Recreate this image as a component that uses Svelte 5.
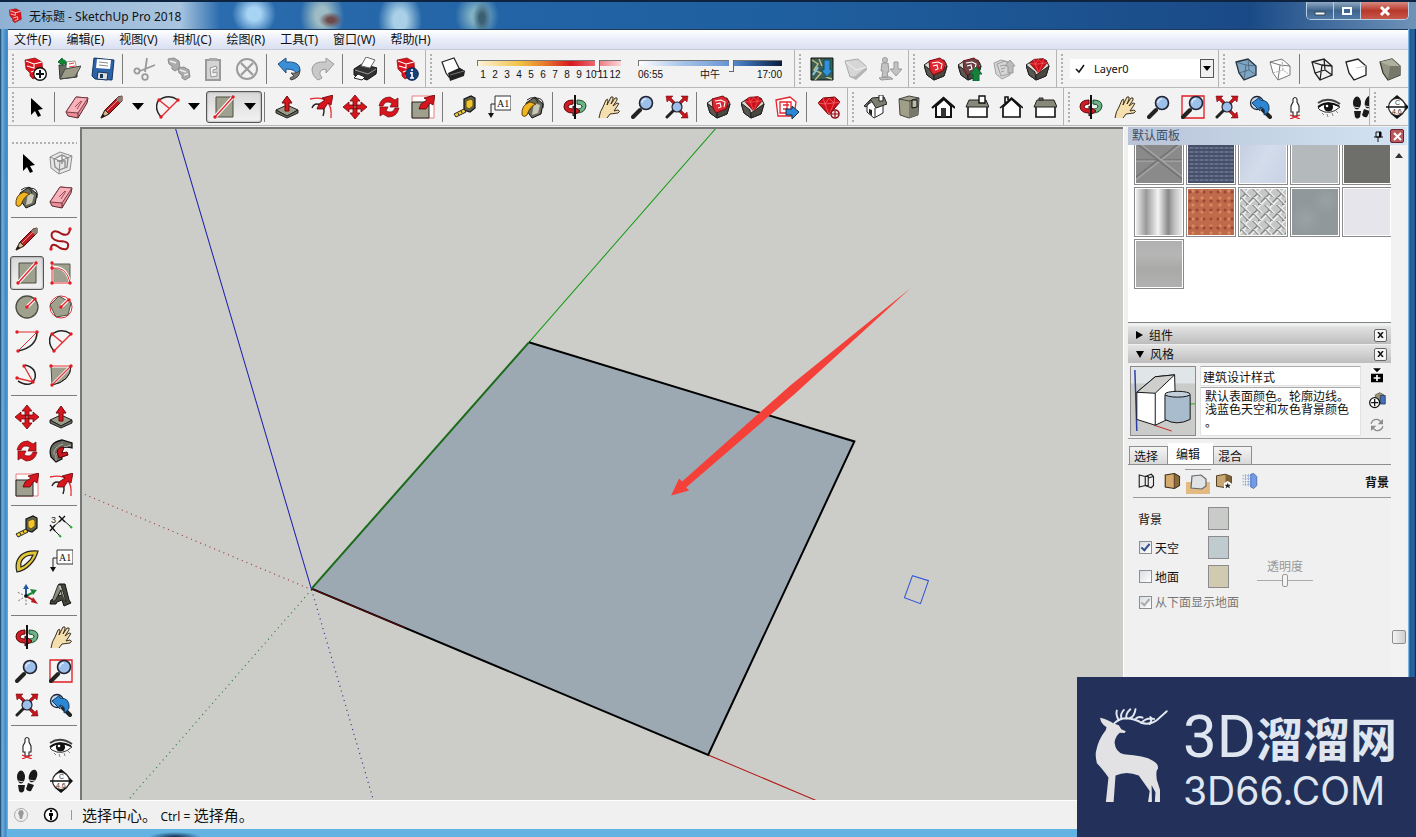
<script lang="ts">
    // Shared icon fragments, all drawn on a 24 x 24 grid
    const cube = 'M2 5 L14 2 L22 9 L22 18 L10 23 L5 16 Z';
    const handle = '<path d="M9 15 L2 22" stroke="#222" stroke-width="4" stroke-linecap="round"/>';
    const lens = '<circle cx="15" cy="8" r="6.5" fill="#9cc0ea" stroke="#223" stroke-width="1.6"/><path d="M11 8a4 4 0 0 1 4-4" stroke="#dcebfa" stroke-width="1.5" fill="none"/>';
    const logo = '<path d="M2 3 L12 1 L19 5 L20 17 L10 22 L7 19 L7 16 L3 12 Z" fill="#d8141c" stroke="#8e0c12" stroke-width=".7"/><path d="M3 4 L11 7 L19 5 M11 7 L11 11 L4 9 M8 15 L14 13 L15 17 L10 19" stroke="#fff" stroke-width="1.1" fill="none"/>';
    const greyLogo = 'M1 2 L7 1 L12 4 L13 11 L8 14 L5 12 L5 9 L2 7 Z';
    const arrowUpRight = '<path d="M24 0 L22 10 L19 8 L15 14 L8 14 L10 9 L16 5 L13 3 Z" fill="#d8141c" stroke="#5e0508" stroke-width=".8"/>';
    const redArrows = '<path d="M1 1h7l-2 2 4 4-2 2-4-4-2 2z M23 1h-7l2 2-4 4 2 2 4-4 2 2z M23 23h-7l2-2-4-4 2-2 4 4 2-2z" fill="#c4151c" stroke="#6a0a0e" stroke-width=".5"/>';
    // opened carton with something lying in it
    const carton = (inside: string) =>
        `<path d="M0 8 L6 4 L20 3 L23 9 L20 19 L10 23 L3 18 Z" fill="#ded9d0" stroke="#222"/><path d="M0 8 L3 18 L10 23 L9 15Z" fill="#5a5650" stroke="#222"/><path d="M23 9 L20 19 L10 23 L10 18Z" fill="#4a4640" stroke="#222"/>${inside}`;
    const carton3 = (fill: string) =>
        carton(`<path d="M5 4 L16 1 L22 6 L19 14 L9 18 L6 13 Z" fill="${fill}" stroke="#7a0a10"/><path d="M8 6l6-1 4 2-1 5M9 9l4-1 1 4-3 1" stroke="#fff" stroke-width="1.1"/>`);
    const gem = '<path d="M1 8 L6 3 L18 2 L23 7 L12 20 Z" fill="#cf1018" stroke="#6c060a"/><path d="M1 8 L8 9 L17 8 L23 7 M6 3 L8 9 L12 20 L17 8 L18 2 M8 9 L12 3 L17 8" stroke="#ff8086" stroke-width=".6" fill="none"/>';
    const dot = (x: number, y: number) => `<circle cx="${x}" cy="${y}" r="1.7" fill="#e01b22"/>`;

    const icons: Record<string, string> = {
        newFile: logo + '<circle cx="17" cy="17" r="6.3" fill="#fff" stroke="#111" stroke-width="1.4"/><path d="M17 13v8M13 17h8" stroke="#111" stroke-width="2"/>',
        open: '<path d="M2 8 L9 8 L11 10 L20 10 L20 20 L3 22 Z" fill="#6c6c5c" stroke="#333"/><path d="M9 5 L18 4 L20 13 L10 14 Z" fill="#fff" stroke="#999"/><path d="M12 7l5-1M12 10l6-1" stroke="#e33"/><path d="M3 22 L8 12 L24 9 L18 20 Z" fill="#9c9b88" stroke="#444"/><path d="M1 5 L5 1 L6 3 Q10 3 9 8 Q8 6 6 6 L6 8Z" fill="#148a2c" stroke="#063"/>',
        save: '<path d="M3 1 L23 3 L21 23 L4 22 L1 19 Z" fill="#2b63a8" stroke="#16355e"/><path d="M6 2 L20 3 L19 12 L5 11 Z" fill="#fff"/><path d="M8 5l9 1M8 8l9 1" stroke="#888"/><path d="M7 15 L17 16 L16 23 L6 22 Z" fill="#ddd" stroke="#16355e"/><path d="M9 17h3v4H9z" fill="#16355e"/>',
        cut: '<g fill="none" stroke="#999" stroke-width="1.8"><path d="M14 1 L12 15 M22 8 L7 14"/><circle cx="4" cy="14" r="2.6"/><circle cx="12" cy="20" r="2.8"/></g>',
        copy: `<g fill="#ababab" stroke="#8d8d8d"><path d="${greyLogo}"/><path d="${greyLogo}" transform="translate(10 9)"/></g><path d="M3 4l6 2M13 13l6 2M17 18l4-1" stroke="#eee" stroke-width="1.4"/>`,
        paste: '<path d="M5 3h14v20H5z" fill="#d4d4d4" stroke="#9a9a9a" stroke-width="2"/><path d="M8 1h8v3H8z" fill="#aaa"/><path d="M9 11l6-2 1 3-4 1v3l4-1v4l-6 1z" fill="#f2f2f2" stroke="#999"/>',
        erase: '<circle cx="12" cy="12" r="10" fill="none" stroke="#9c9c9c" stroke-width="2"/><path d="M6 6l12 12M18 6L6 18" stroke="#9c9c9c" stroke-width="2.2"/>',
        undo: '<path d="M1 7 L9 1 L9 5 Q22 4 23 12 Q23 17 19 18 Q20 12 9 12 L9 16 Z" fill="#3b8fd6" stroke="#1d4f85"/><path d="M14 16q6 1 9-3 0 8-9 10l-1-2 4-2z" fill="#777a72" stroke="#444"/>',
        redo: '<path d="M23 7 L15 1 L15 5 Q2 4 1 12 Q1 19 7 23 L11 21 Q5 13 15 12 L15 16 Z" fill="#c9c9c9" stroke="#9b9b9b"/>',
        print: '<path d="M1 12 L9 7 L24 11 L23 17 L14 23 L1 18Z" fill="#333" stroke="#111"/><path d="M8 9 L13 0 L22 3 L17 11Z" fill="#fff" stroke="#666"/><path d="M2 13 L15 17 L23 12" stroke="#999" fill="none"/><path d="M1 21 L5 17 L12 20 L9 23Z" fill="#fff" stroke="#222"/>',
        info: logo + '<circle cx="17" cy="17" r="6.3" fill="#173f7a" stroke="#0c254b"/><path d="M17 15v6M17 12v2M15 16h2M15 21h4" stroke="#fff" stroke-width="1.6"/>',
        shadow: '<path d="M1 5 L13 1 L18 11 L23 14 L8 20 L5 16Z" fill="#fff" stroke="#222" stroke-width="1.2"/><path d="M7 16 L18 11 L24 14 L23 19 L9 24Z" fill="#222"/><path d="M9 18l14-4" stroke="#777"/>',
        map: '<path d="M1 1h22v22H1z" fill="#3d5d52" stroke="#111"/><path d="M2 3l6 4-4 6 7 3-6 7M9 2l3 7M16 20l6 2" stroke="#b9bd8a" stroke-width="1.5" fill="none"/><path d="M3 18l5-8" stroke="#8ac2e0" stroke-width="2"/><path d="M14 3h6v10h3l-6 7-6-7h3z" fill="#3190dd" stroke="#155"/>',
        terrain: '<path d="M1 4 L14 2 L23 10 L11 20 L6 20Z" fill="#d6d6d6" stroke="#aaa"/><path d="M11 20 L23 10 L23 13 L12 23 L6 20Z" fill="#b5b5b5"/><path d="M2 5l10 8 11-3" stroke="#f2f2f2" fill="none"/>',
        photo: '<g fill="#c3c3c3" stroke="#989898"><circle cx="7" cy="3" r="2.5"/><path d="M4 6h6l1 9H9l1 5H4l1-6H3zM1 21l11-1 3 2-12 1z"/><path d="M16 5h4v7h4l-6 7-6-7h4z"/></g>',
        warehouse: carton3('#dd2830'),
        share: carton3('#6a4246') + '<path d="M15 24v-7h-3l6-7 6 7h-3v7z" fill="#17813b" stroke="#063"/>',
        shareOff: '<path d="M2 6 L9 3 L20 6 L18 18 L10 22 L4 17Z M5 7l8-3 5 4-1 9-8 2z M8 9l5-1M9 12l4-1M9 15l3-1" fill="#d6d6d6" stroke="#9e9e9e"/><path d="M16 16V9h-3l5-6 5 6h-2v7z" fill="#bbb" stroke="#999"/>',
        extension: carton(`<g transform="translate(3 0) scale(.8)">${gem}</g>`),
        xray: `<path d="${cube}" fill="#7ea6c4" stroke="#25323d" stroke-width="1.3"/><path d="M2 5 L12 8 L22 9 M12 8 L10 23 M5 16 L15 13 L22 18 M14 2 L15 13" stroke="#40566a" stroke-width=".7" fill="none"/>`,
        backEdges: `<path d="${cube}" fill="#fff" stroke="#777"/><path d="M2 5 L12 8 L22 9 M12 8 L10 23" stroke="#777" fill="none"/><path d="M5 16 L15 13 L22 18 M14 2 L15 13" stroke="#aaa" stroke-dasharray="2 1" fill="none"/>`,
        wireframe: `<path d="${cube}M2 5 L12 8 L22 9 M12 8 L10 23 M5 16 L15 13 L22 18 M14 2 L15 13" fill="none" stroke="#222" stroke-width="1.3"/>`,
        hidden: `<path d="${cube}" fill="#fff" stroke="#222" stroke-width="1.3"/><path d="M22 9 L12 11" stroke="#ccc"/>`,
        shaded: `<path d="${cube}" fill="#949583" stroke="#34352c" stroke-width="1.2"/><path d="M2 5 L12 9 L22 9 L14 2Z" fill="#b0b09e"/><path d="M12 9 L10 23 L22 18 V9Z" fill="#77786a"/>`,
        select: '<path d="M8 3 L8 20 L12 16 L15 22 L18 20.500 L15 15 L20 14Z" fill="#000"/>',
        eraser: '<path d="M1 17 L11 2 L23 3 L22 8 L13 23 L3 21Z" fill="#ec8f9a" stroke="#592b31"/><path d="M1 17 L13 18 L23 3 L11 2Z" fill="#f7b3bb" stroke="#7c3a42"/><path d="M13 18v5" stroke="#592b31"/><path d="M10 12l6-6M12 14l5-8" stroke="#a34650"/>',
        pencil: '<path d="M1 23 L5 15 L18 2 L22 1 L22 6 L9 19Z" fill="#bd1c24" stroke="#4d080b"/><path d="M1 23 L5 15 L9 19Z" fill="#d6b892" stroke="#332"/><path d="M1 23l2-4 2 2z" fill="#111"/><path d="M18 2l4-1v5l-2 2-4-4z" fill="#8c8075"/><path d="M7 16L18 5" stroke="#f08a8f"/>',
        pieArc: '<path d="M2 6 Q12 -2 22 5 M2 6 Q-2 14 5 22" stroke="#222" stroke-width="1.5" fill="none"/><path d="M3 5 L14 14 M22 5 L5 22" stroke="#e32b31" stroke-width="1.4"/>' + dot(3, 5) + dot(22, 5) + dot(5, 22),
        rect: '<path d="M4 2h17v20H4z" fill="#a0a08e" stroke="#4e4e43"/><path d="M3 22L21 2" stroke="#fff" stroke-width="3.5"/><path d="M3 22L21 2" stroke="#e32b31" stroke-width="1.5"/>' + dot(3, 22) + dot(21, 2),
        pushPull: '<path d="M1 15 L12 10 L23 15 L12 21Z" fill="#9a9b88" stroke="#222"/><path d="M1 15v3l11 5 11-5v-3l-11 6z" fill="#6b6c5e" stroke="#222"/><path d="M10 16V8H7l5-7 5 7h-3v8z" fill="#d8141c" stroke="#6e080c"/>',
        offset: '<path d="M1 4 Q24 -1 22 23" stroke="#e32b31" stroke-width="1.3" fill="none"/><path d="M3 13 Q5 7 12 10 Q17 13 14 21" stroke="#222" stroke-width="1.4" fill="none"/>' + arrowUpRight,
        move: '<path d="M12 0l5 6h-3v5h-4V6H7z M12 24l5-6h-3v-5h-4v5H7z M0 12l6-5v3h5v4H6v3z M24 12l-6-5v3h-5v4h5v3z" fill="#d8141c" stroke="#6e080c" stroke-width=".8"/>',
        rotate: '<path d="M2 11 Q4 2 13 2 L18 5 L21 3 V12 H13 L15 8 Q8 5 6 11Z" fill="#d8141c" stroke="#6e080c" stroke-width=".7"/><path d="M22 13 Q20 22 11 22 L6 19 L3 21 V12 H11 L9 16 Q16 19 18 13Z" fill="#d8141c" stroke="#6e080c" stroke-width=".7"/>',
        scale: '<path d="M1 1h22v22H1z" fill="#fff" stroke="#f07a7e"/><path d="M1 7h17v16H1z" fill="#a0a08e" stroke="#222"/>' + arrowUpRight,
        tape: '<path d="M11 4 L18 1 L22 3 L22 13 L17 17 L11 15Z" fill="#5e5f53" stroke="#111" stroke-width="1.2"/><path d="M13 6 L18 4 L20 6 V11 L16 14 L13 12Z" fill="#eec52e" stroke="#665311"/><path d="M11 14 L1 19 L3 22 L13 17Z" fill="#f4cf2e" stroke="#222"/><path d="M5 18l1 2M8 16l1 2" stroke="#222"/>',
        label: '<path d="M8 1h16v14H8z" fill="#fff" stroke="#333"/><text x="10" y="12" font-family="Liberation Serif, serif" font-size="10" fill="#111">A1</text><path d="M8 9H4v10" stroke="#222" fill="none"/><path d="M1 18h6l-3 5z" fill="#111"/>',
        paint: '<path d="M5 8 L14 2 L22 9 L20 19 L11 23 L6 16Z" fill="#6a6b5e" stroke="#111"/><path d="M6 5 Q14 -1 17 8 M15 3 Q24 3 22 13" stroke="#222" fill="none"/><path d="M13 8l6 2-2 8-6 2z" fill="#c7c8b6"/><path d="M1 20 Q0 10 9 7 L15 9 Q9 11 6 20 Q3 23 1 20Z" fill="#f1b521" stroke="#5c4208"/>',
        orbit: '<path d="M14 5 Q23 5 23 11 Q22 18 14 18 L14 14 Q19 14 19 11 Q18 9 14 9Z" fill="#6fb186" stroke="#134c29"/><path d="M10 5 Q1 5 1 12 Q2 18 10 18 L10 21 L17 16 L10 11 L10 14 Q5 14 5 11 Q7 9 10 9Z" fill="#cf1c25" stroke="#570609"/><path d="M12 0v24" stroke="#111" stroke-width="2"/>',
        pan: '<path d="M2 23 Q3 16 6 12 L9 5 Q11 3 11 6 L10 10 L14 2 Q17 1 16 4 L14 9 L18 3 Q21 2 20 5 L16 11 L20 8 Q23 8 21 10 L17 16 L21 15 Q24 16 21 18 L13 19 L10 23" fill="#f6dfae" stroke="#3a3020"/>',
        zoom: handle + lens,
        zoomWindow: '<path d="M1 1h22v22H1z" fill="none" stroke="#e01b22" stroke-width="1.3"/>' + handle + lens,
        zoomExtents: redArrows + '<path d="M9 15L2 22" stroke="#222" stroke-width="3" stroke-linecap="round"/><circle cx="12" cy="12" r="5" fill="#9cc0ea" stroke="#223" stroke-width="1.2"/>',
        previous: '<circle cx="8" cy="8" r="6.500" fill="#c5d9ed" stroke="#223" stroke-width="1.3"/><path d="M14 15l7 7" stroke="#222" stroke-width="4" stroke-linecap="round"/><path d="M3 8 L11 2 L11 5 Q21 5 20 15 Q18 19 15 20 Q17 13 11 12 L11 16Z" fill="#2e87d2" stroke="#123d68"/>',
        iso: '<path d="M4 10v7l7 6 9-5V9L10 6z" fill="#fff" stroke="#222"/><path d="M1 11 L9 3 L21 2 L24 9 L13 13 L8 5 L3 12Z" fill="#7d7e70" stroke="#222"/><path d="M16 0h4v6h-4z" fill="#fff" stroke="#222"/><path d="M6 14l3 1v6l-3-3z" fill="#222"/><path d="M12 13v9" stroke="#222"/>',
        top: '<path d="M2 4 L12 1 L22 3 L21 20 L12 23 L3 20Z" fill="#a09f88" stroke="#444"/><path d="M12 6v17l9-3V3z" fill="#77786a"/><path d="M2 4l10 2 10-3" stroke="#444" fill="none"/><path d="M15 5h5v7l-5 1z" fill="#bcbba8" stroke="#111"/>',
        front: '<path d="M5 11v11h15V11l-7-7z" fill="#fff" stroke="#111" stroke-width="2"/><path d="M1 13L12.500 3 24 13" stroke="#111" stroke-width="2.200" fill="none"/><path d="M10 13h5v9h-5z" fill="#333"/>',
        right: '<path d="M3 11h19v11H3z" fill="#fff" stroke="#111" stroke-width="1.600"/><path d="M4 5h17l3 7H1z" fill="#88897a" stroke="#222"/><path d="M14 1h6v7h-6z" fill="#fff" stroke="#111" stroke-width="1.400"/>',
        back: '<path d="M4 12v10h17V12l-8.500-8z" fill="#fff" stroke="#111" stroke-width="1.700"/><path d="M1 13L12.500 3 24 13M6 8V2h3v3" stroke="#111" stroke-width="1.600" fill="none"/>',
        left: '<path d="M3 11h19v11H3z" fill="#fff" stroke="#111" stroke-width="1.600"/><path d="M4 5h17l3 7H1z" fill="#88897a" stroke="#222"/><path d="M6 3h4v2H6z" fill="#88897a" stroke="#222"/>',
        send: '<g stroke="#e4252d" fill="#fff" stroke-width="1.300"><path d="M1 5l14-3 6 5-2 14H3z"/><path d="M5 7h11v11H5zM8 10h6M8 14h5M12 7v8" fill="none"/></g><path d="M11 14h6v-3l7 6-7 7v-4h-6z" fill="#2e87d2" stroke="#134"/>',
        gem: gem + '<circle cx="18" cy="19" r="4" fill="#f5e4e4" stroke="#8e1016" stroke-width="1.600"/><path d="M18 16v6M15 19h6" stroke="#8e1016" stroke-width="1.200"/>',
        position: '<path d="M10 4q2-3 4 0v3l2 4v6h-2v4h-4v-4H8v-6l2-4z" fill="#fff" stroke="#222" stroke-width="1.100"/><path d="M7 20l10 4M17 20L7 24" stroke="#e01b22" stroke-width="1.300"/>',
        look: '<path d="M1 13Q10 4 23 12Q13 21 3 15Z" fill="#fff" stroke="#333"/><path d="M1 8Q11 1 23 9" stroke="#444" stroke-width="2" fill="none"/><path d="M1 12Q10 5 22 11" stroke="#111" stroke-width="1.800" fill="none"/><circle cx="11.500" cy="12" r="4.600" fill="#111"/><circle cx="10" cy="11" r="1.300" fill="#fff"/><path d="M5 18l2 2M10 19l1 3M15 18l1 3M19 16l2 2" stroke="#888"/>',
        walk: '<g fill="#1a1a1a"><ellipse cx="6" cy="8" rx="4" ry="6.500"/><path d="M3 16h7l-1 6q-3 3-5 0z"/><ellipse cx="18" cy="7" rx="4" ry="6.500" transform="rotate(18 18 7)"/><path d="M13 14l6 2-3 6q-3 1-5-2z"/></g><path d="M3 12l6 1M14 11l6 1" stroke="#ddd"/>',
        section: '<path d="M18 6l6 6-6 6zM12 0l6 5H6zM12 24l6-5H6z" fill="#111"/><circle cx="12" cy="12" r="8.500" fill="#fff" stroke="#222" stroke-width="1.200"/><path d="M1 12h22" stroke="#111" stroke-width="1.500"/><g font-family="Liberation Sans, sans-serif" font-size="7" fill="#333"><text x="10" y="10">C</text><text x="7" y="19">4.6</text></g>',
        component: '<path d="M1 6L11 1l12 4-2 14-11 4-8-6zM1 6l10 4 12-5M11 10l-1 13" fill="#e6e6e6" stroke="#8c8c8c"/><path d="M5 8l8-4 6 3-1 9-8 3-4-3zM8 10h8v6M13 5v8" fill="none" stroke="#8c8c8c" stroke-width="1.300"/>',
        freehand: '<path d="M2 22 Q2 14 11 21 Q20 25 19 17 Q18 14 9 14 Q1 12 3 6 Q6 2 13 7 Q20 10 21 2" stroke="#a0161c" stroke-width="2" fill="none"/>' + dot(2, 22) + dot(21, 2),
        rotRect: '<path d="M3 3h18v18H3z" fill="#a0a08e" stroke="#5c5c50"/><path d="M3 2v20h18M3 6Q17 5 21 21" stroke="#fff" stroke-width="2.500" fill="none"/><path d="M3 2v20h18M3 7Q17 5 21 21" stroke="#e32b31" fill="none"/>' + dot(3, 2) + dot(3, 7) + dot(3, 22) + dot(21, 22),
        circle: '<circle cx="12" cy="12" r="11" fill="#a0a08e" stroke="#4c4c41" stroke-width="1.300"/><path d="M12 12l7-7" stroke="#fff" stroke-width="3.500"/><path d="M12 12l7-7" stroke="#e32b31" stroke-width="1.400"/>' + dot(12, 12) + dot(20, 4),
        polygon: '<circle cx="12" cy="12" r="11" fill="#fff" stroke="#e32b31"/><path d="M10 1L22 8l-3 12-12 2L1 10z" fill="#a0a08e" stroke="#4c4c41"/><path d="M12 12l7-7" stroke="#fff" stroke-width="3.500"/><path d="M12 12l7-7" stroke="#e32b31" stroke-width="1.400"/>' + dot(12, 12) + dot(20, 5),
        arc: '<path d="M22 3Q22 18 3 22" stroke="#222" stroke-width="1.500" fill="none"/><path d="M2 3h20L3 22" stroke="#e32b31" fill="none"/>' + dot(2, 3) + dot(22, 3) + dot(3, 22),
        arc3: '<path d="M10 2Q22 5 20 15Q16 26 3 18" stroke="#222" stroke-width="1.500" fill="none"/><path d="M9 3L18 19 2 15" stroke="#e32b31" stroke-width="1.300" fill="none"/>' + dot(9, 3) + dot(18, 19) + dot(2, 15),
        pie: '<path d="M2 3H22Q21 19 3 22Z" fill="#a0a08e" stroke="#4c4c41"/><path d="M3 22L22 3H2" stroke="#fff" stroke-width="3" fill="none"/><path d="M3 22L22 3H2" stroke="#e32b31" stroke-width="1.200" fill="none"/><path d="M22 3Q22 18 3 22" stroke="#222" fill="none"/>' + dot(2, 3) + dot(22, 3) + dot(3, 22),
        follow: '<path d="M2 18Q-2 4 13 1L23 4V9Q13 6 12 13L13 20 7 23Z" fill="#6b6c60" stroke="#111" stroke-width="1.300"/><path d="M5 16Q4 8 14 5M7 22Q4 9 22 6" stroke="#aaa" fill="none"/><path d="M8 13Q9 8 15 8L13 14l5-1 1 3-9 3z" fill="#c8161d" stroke="#500"/>',
        dimension: '<path d="M3 13L13 4M3 13l7 7M13 4l8 7" stroke="#222"/><path d="M1 10l5 6M6 10l-5 6M10 1l6 6M16 1l-6 6" stroke="#111" stroke-width="1.400"/><path d="M10 20l2 2M21 11l2 2" stroke="#2a2" stroke-width="2"/><text x="2" y="8" font-family="Liberation Sans, sans-serif" font-size="9" fill="#222">3</text>',
        protractor: '<path d="M2 23 Q-1 13 6 6 Q12 1 23 2 Q21 10 15 16 Q9 22 2 23Z M6 18Q5 12 9 9Q12 6 18 6Q16 11 12 14Q9 17 6 18Z" fill="#e2c735" fill-rule="evenodd" stroke="#222" stroke-width="1.200"/>',
        axes: '<path d="M11 13V5" stroke="#2257a2" stroke-width="2"/><path d="M8 6l3-5 3 5z" fill="#2257a2"/><path d="M11 13l6-3" stroke="#1e8238" stroke-width="2"/><path d="M15 6l7 1-4 5z" fill="#1e8238"/><path d="M11 13l7 4" stroke="#b91a22" stroke-width="2"/><path d="M18 14l5 7-7-2z" fill="#b91a22"/><path d="M11 13v9M11 13L2 9M11 13l-8 5" stroke="#777" stroke-dasharray="2 1.500"/><circle cx="11" cy="13" r="1.800" fill="#111"/>',
        text3d: '<path d="M10 1h6l4 16 2 3-7 3-2-6-5 2-1 2H1l1-4 3-1z" fill="#44453c" stroke="#111"/><path d="M9 2h3l5 17M9 13l4-1-1-5z" fill="#c9cabc" stroke="#111" stroke-width=".8"/><path d="M9 2L3 18h3l6-11" fill="#8b8c7c" stroke="#111" stroke-width=".8"/>',
        addDetail: '<path d="M4 1h16v7H4z" fill="#fff"/><path d="M6 2h12l-6 6zM3 10h18v13H3z" fill="#000"/><path d="M12 12v9M7 16.500h10" stroke="#fff" stroke-width="2.500"/>',
        newStyle: '<path d="M9 4l6-3 6 3v10l-6 2-6-3z" fill="#9b9373" stroke="#554"/><path d="M16 5h7v12h-7z" fill="#416fbd" stroke="#234"/><circle cx="8" cy="15" r="7" fill="#fff" stroke="#111" stroke-width="1.800"/><path d="M8 10v10M3 15h10" stroke="#111" stroke-width="1.800"/>',
        refresh: '<path d="M3 10Q6 2 14 4l4 3M21 14Q18 22 10 20l-4-3" stroke="#8c8c8c" stroke-width="2" fill="none"/><path d="M21 3v8h-8zM3 21v-8h8z" fill="#8c8c8c"/>',
        edgeTab: '<path d="M3 4l8 2 8-3 3 3v12l-3 3-8-3-8 2zM11 6v12M11 6h4v12h-4M22 6l-7 2" fill="#eee" stroke="#222" stroke-width="1.500"/>',
        faceTab: '<path d="M3 4l12-2 7 4v12l-7 4-12-2z" fill="#d6aa6c" stroke="#3b2e1c" stroke-width="1.500"/><path d="M15 2v20l7-4V6z" fill="#8a6a3c" stroke="#3b2e1c"/>',
        skyTab: '<path d="M0 12h24v12H0z" fill="#e3bb82"/><path d="M6 6l9-1 5 4v7l-4 3-11-1z" fill="#dfe3e5" stroke="#666" stroke-width="1.200"/>',
        markTab: '<path d="M2 5l12-2 8 3v11l-7 4-13-2z" fill="#c9a671" stroke="#4e3c22" stroke-width="1.300"/><path d="M14 3v17l8-3V6z" fill="#7a6138"/><path d="M12 15l5-3 6 4-4 7-7-1z" fill="#fff"/><path d="M17 14l1 3h3l-2 2 1 3-3-2-3 2 1-3-2-2h3z" fill="#222"/>',
        modelTab: '<path d="M2 5h11M2 9h11M2 13h11M2 17h11M6 3v16M10 3v16" stroke="#6d94dc" stroke-dasharray="2 1"/><path d="M13 3l4-1 4 4v12l-4 4-4-2z" fill="#739ae4" stroke="#3a5da6"/>'
    };

    type Item = { icon?: string; label?: string; drop?: boolean; on?: boolean; sep?: boolean };
    const sep: Item = { sep: true };
    const list = (names: string): Item[] => names.split(' ').map((n) => (n === '|' ? sep : { icon: n, label: n }));

    const standard = list('newFile open save | cut copy paste erase | undo redo | print | info');
    const location = list('map terrain photo');
    const storeTools = list('warehouse share shareOff extension');
    const faceStyles = list('xray backEdges | wireframe hidden shaded');
    const started: Item[] = [
        ...list('select | eraser'),
        { icon: 'pencil', label: 'Line', drop: true },
        { icon: 'pieArc', label: 'Arc', drop: true },
        { icon: 'rect', label: 'Rectangle', drop: true, on: true },
        ...list('| pushPull offset move rotate scale | tape label paint | orbit pan zoom zoomExtents | warehouse extension send | gem')
    ];
    const views = list('iso top front right back left');
    const camera = list('orbit pan zoom zoomWindow zoomExtents previous position look walk');
    const sideTools = list(
        'select component paint eraser | pencil freehand rect rotRect circle polygon arc pieArc arc3 pie | move pushPull rotate follow scale offset | tape dimension protractor label axes text3d | orbit pan zoom zoomWindow zoomExtents previous | position look walk section'
    ).map((item) => ({ ...item, on: item.icon === 'rect' }));

    const menus = ['文件(F)', '编辑(E)', '视图(V)', '相机(C)', '绘图(R)', '工具(T)', '窗口(W)', '帮助(H)'];
    const months = [1, 2, 3, 4, 5, 6, 7, 8, 9, 10, 11, 12];
    const materials = ['star', 'weave', 'frost', 'plain', 'dark', 'chrome', 'rust', 'tread', 'blotch', 'pale', 'brushed'];
    const styleTabs = ['edgeTab', 'faceTab', 'skyTab', 'markTab', 'modelTab'];

    let month = $state(10.3);
    let time = $state(65);
    let opacity = $state(50);
    let sky = $state(true);
    let ground = $state(false);
    let styleName = $state('建筑设计样式');
    let styleText = $state('默认表面颜色。轮廓边线。浅蓝色天空和灰色背景颜色。');
</script>

{#snippet glyph(name: string, size: number)}
    <svg width={size} height={size} viewBox="0 0 24 24" fill="none" aria-hidden="true">{@html icons[name]}</svg>
{/snippet}

{#snippet tools(items: Item[])}
    {#each items as item}
        {#if item.sep}
            <span class="sep"></span>
        {:else}
            <button class="tool" class:drop={item.drop} class:on={item.on} aria-label={item.label}>
                {@render glyph(item.icon ?? '', 24)}
                {#if item.drop}
                    <svg width="12" height="7" viewBox="0 0 12 7"><path d="M0 0h12L6 7z" /></svg>
                {/if}
            </button>
        {/if}
    {/each}
{/snippet}

<div class="window">
    <header class="titlebar">
        <svg width="16" height="16" viewBox="0 0 24 24" fill="none">{@html logo}</svg>
        <h1>无标题 - SketchUp Pro 2018</h1>
        <div class="controls">
            <button aria-label="Minimize"><svg width="14" height="12"><path d="M2 7h10v3H2z" fill="#fff" stroke="#345" stroke-width="1" /></svg></button>
            <button aria-label="Maximize"><svg width="14" height="12"><path d="M3 3h8v6H3z" fill="none" stroke="#fff" stroke-width="2" /></svg></button>
            <button class="quit" aria-label="Close"><svg width="14" height="12"><path d="M3 2l8 8M11 2l-8 8" stroke="#fff" stroke-width="3" /></svg></button>
        </div>
    </header>

    <div class="client">
        <nav class="menubar">
            {#each menus as menu}
                <button>{menu}</button>
            {/each}
        </nav>

        <div class="toolrow">
            <div class="group"><span class="grip"></span>{@render tools(standard)}</div>
            <div class="group shadows">
                <span class="grip"></span>
                {@render tools(list('shadow'))}
                <div class="scale">
                    <input class="months" type="range" min="1" max="12" step="0.1" bind:value={month} aria-label="Month" />
                    <div class="ticks">
                        {#each months as m}<span>{m}</span>{/each}
                    </div>
                </div>
                <div class="scale">
                    <input class="hours" type="range" min="0" max="100" bind:value={time} aria-label="Time" />
                    <div class="ticks hourticks"><span>06:55</span><span>中午</span><span>17:00</span></div>
                </div>
            </div>
            <div class="group"><span class="grip"></span>{@render tools(location)}</div>
            <div class="group"><span class="grip"></span>{@render tools(storeTools)}</div>
            <div class="group">
                <span class="grip"></span>
                <label class="layer">
                    <svg width="12" height="10" viewBox="0 0 12 10"><path d="M2 5l3 3 5-7" fill="none" stroke="#111" stroke-width="1.500" /></svg>
                    <select aria-label="Layer"><option>Layer0</option></select>
                    <span class="picker"><svg width="8" height="5"><path d="M0 0h8L4 5z" /></svg></span>
                </label>
            </div>
            <div class="group last"><span class="grip"></span>{@render tools(faceStyles)}</div>
        </div>

        <div class="toolrow">
            <div class="group"><span class="grip"></span>{@render tools(started)}</div>
            <div class="group"><span class="grip"></span>{@render tools(views)}</div>
            <div class="group shrink"><span class="grip"></span>{@render tools(camera)}</div>
            <div class="group last"><span class="grip"></span>{@render tools(list('section'))}</div>
        </div>

        <main>
            <aside class="palette">
                <span class="hgrip"></span>
                <div class="toolgrid">{@render tools(sideTools)}</div>
            </aside>

            <div class="viewport">
                <svg viewBox="82 128 1041 670" preserveAspectRatio="xMidYMid slice">
                    <!-- hidden halves of the axes -->
                    <g stroke-dasharray="1 4" stroke-width="1.200" fill="none">
                        <path d="M81 491L312 588" stroke="#a03a3a" />
                        <path d="M312 588L128 799" stroke="#2f7a3a" />
                        <path d="M312 588L374 799" stroke="#2a2f90" />
                    </g>
                    <path d="M176 127L312 588" stroke="#1c1cae" />
                    <path d="M716 127L529 341" stroke="#129a12" />
                    <path d="M708 753L817 799" stroke="#b01010" />
                    <path d="M529 341L854 440 708 753 312 587z" fill="#9ca9b3" />
                    <path d="M529 341L854 440 708 753 312 587" fill="none" stroke="#000" stroke-width="2" />
                    <path d="M312 587L405 626" stroke="#5c0a0a" stroke-width="1" />
                    <path d="M529 341L312 587" stroke="#1a6a1a" stroke-width="2" />
                    <path d="M912 574l16 5-8 23-16-6z" fill="none" stroke="#2c50d8" stroke-width="1" />
                    <path d="M671 494L679 477 682 480 790 384 910 287 795 392 686 486 689 489z" fill="#f5403a" />
                </svg>
            </div>

            <aside class="tray">
                <div class="trayhead">
                    <h2>默认面板</h2>
                    <button class="pin" aria-label="Pin"><svg width="9" height="11"><path d="M2 1h5v5H2zM0 6h9M4 6v5" fill="none" stroke="#111" /><path d="M5 1h2v5H5z" /></svg></button>
                    <button class="trayclose" aria-label="Close tray"><svg width="9" height="9"><path d="M1 1l7 7M8 1L1 8" stroke="#fff" stroke-width="2" /></svg></button>
                </div>
                <div class="traybody">
                    <div class="content">
                        <div class="materials">
                            {#each materials as m}
                                <button class="mat" aria-label={m}><span class={m}></span></button>
                            {/each}
                        </div>

                        <div class="fold">
                            <svg width="7" height="8"><path d="M0 0l7 4-7 4z" /></svg>
                            <h3>组件</h3>
                            <button aria-label="Close components"><svg width="7" height="6"><path d="M1 0l5 6M6 0L1 6" stroke="#111" stroke-width="1.500" /></svg></button>
                        </div>
                        <div class="fold">
                            <svg width="8" height="7"><path d="M0 0h8L4 7z" /></svg>
                            <h3>风格</h3>
                            <button aria-label="Close styles"><svg width="7" height="6"><path d="M1 0l5 6M6 0L1 6" stroke="#111" stroke-width="1.500" /></svg></button>
                        </div>

                        <div class="style">
                            <svg class="thumb" width="66" height="70" viewBox="0 0 66 70">
                                <path d="M0 0h66v70H0z" fill="#c9ccc8" />
                                <path d="M0 0h66v17H0z" fill="#e0e5e8" />
                                <path d="M4 3l2 63" stroke="#2a3ea8" stroke-width="1.500" />
                                <path d="M60 38h6" stroke="#2a2" />
                                <path d="M24 60l18 6" stroke="#c22" />
                                <path d="M6 26L25 10 45 8 46 50 25 60 6 54z" fill="#fff" stroke="#111" />
                                <path d="M6 26L25 10 45 8 25 27z" fill="#cfd0ce" stroke="#111" />
                                <path d="M25 27v33" stroke="#111" />
                                <path d="M35 29v25q12 7 26 0V29z" fill="#a9bccd" stroke="#111" />
                                <ellipse cx="48" cy="28" rx="13" ry="3" fill="#c2d0dc" stroke="#111" />
                            </svg>
                            <div class="about">
                                <input type="text" aria-label="Style name" bind:value={styleName} />
                                <textarea aria-label="Style description" bind:value={styleText}></textarea>
                            </div>
                            <div class="styleactions">
                                <button aria-label="Show details">{@render glyph('addDetail', 16)}</button>
                                <button aria-label="New style">{@render glyph('newStyle', 17)}</button>
                                <button aria-label="Update style">{@render glyph('refresh', 16)}</button>
                            </div>
                        </div>

                        <div class="tabs">
                            <button>选择</button><button class="current">编辑</button><button>混合</button>
                        </div>

                        <div class="pages">
                            {#each styleTabs as t}
                                <button class:sky={t === 'skyTab'} aria-label={t}>{@render glyph(t, t === 'skyTab' ? 24 : 18)}</button>
                            {/each}
                            <strong>背景</strong>
                        </div>

                        <div class="settings">
                            <div class="line"><span class="name">背景</span><button class="color bg" aria-label="Background colour"></button></div>
                            <div class="line">
                                <label class="name"><input type="checkbox" bind:checked={sky} />天空</label>
                                <button class="color air" aria-label="Sky colour"></button>
                            </div>
                            <div class="line">
                                <label class="name"><input type="checkbox" bind:checked={ground} />地面</label>
                                <button class="color soil" aria-label="Ground colour"></button>
                                <label class="opacity">透明度<input type="range" disabled bind:value={opacity} /></label>
                            </div>
                            <label class="name off"><input type="checkbox" checked disabled />从下面显示地面</label>
                        </div>
                    </div>
                    <div class="scroll">
                        <svg width="8" height="5"><path d="M4 0l4 5H0z" fill="#333" /></svg>
                        <span class="scrollthumb"></span>
                    </div>
                </div>
            </aside>
        </main>

        <footer>
            <svg width="16" height="16" viewBox="0 0 16 16"><circle cx="8" cy="8" r="6.500" fill="#eee" stroke="#aaa" /><path d="M8 3a3 3 0 0 0-2 5l1 4h2l1-4a3 3 0 0 0-2-5z" fill="#999" /></svg>
            <svg width="16" height="16" viewBox="0 0 16 16"><circle cx="8" cy="8" r="6.500" fill="#fff" stroke="#111" stroke-width="1.500" /><circle cx="8" cy="4" r="1.200" /><path d="M6 6h4v3H9v4H7V9H6z" /></svg>
            <span class="bar"></span>
            <p>选择中心。 <span>Ctrl =</span> 选择角。</p>
        </footer>
    </div>

    <div class="brand">
        <svg width="76" height="100" viewBox="64 112 236 304">
            <path d="M86 148Q112 154 128 166L144 172 152 184 166 190 162 196 147 195Q132 208 131 226 134 256 160 262 225 266 250 282 268 292 266 306 258 312 262 340L272 372V410H256L258 380 246 358 247 410H235L240 376 222 350 206 328Q168 312 134 328L128 410H104L112 334Q92 306 76 290 70 262 74 250 80 216 104 186L106 178Q88 166 86 148z" fill="#e2e2e4" />
            <g fill="none" stroke="#e2e8f0" stroke-width="6" stroke-linecap="round">
                <path d="M130 166Q146 150 168 150 196 152 214 164 240 172 262 156L293 128" />
                <path d="M144 156Q134 140 138 126M152 152Q148 136 160 124M168 150Q164 136 180 122M178 150Q192 146 196 122M196 152Q206 142 218 148M214 164Q230 146 254 152M240 168Q250 150 242 146" />
            </g>
        </svg>
        <div class="words">
            <p class="big"><span>3D</span>溜溜网</p>
            <p class="small">3D66.COM</p>
        </div>
    </div>
</div>

<style>
:global(body) {
    margin: 0;
}

.window {
    --ui: "Noto Sans", "Noto Sans CJK SC", sans-serif;
    --cjk: "Noto Sans CJK SC", sans-serif;
    box-sizing: border-box;
    height: 100vh;
    display: flex;
    flex-direction: column;
    padding: 0 8px 8px;
    font-family: var(--ui);
    font-size: 12px;
    color: #111;
    background:
        radial-gradient(ellipse 26px 5px at 175px 100%, #0d2a4a, transparent),
        linear-gradient(90deg, #16375c 0, #6fb0dd 2px, #3f86c4 6px, transparent 7px),
        linear-gradient(270deg, #0b1d38 0, #2468a8 2px, #1d5796 6px, #9fd0ee 8px, transparent 9px),
        linear-gradient(#4b8bc4, #62b3e2);
    overflow: hidden;
}

button {
    margin: 0;
    padding: 0;
    border: none;
    background: none;
    font: inherit;
    color: inherit;
}

svg {
    display: block;
}

h1, h2, h3, p {
    margin: 0;
    font-size: 12px;
    font-weight: 400;
}

.titlebar {
    flex: none;
    height: 29px;
    margin: 0 -8px;
    padding: 0 7px 0 8px;
    box-sizing: border-box;
    display: flex;
    align-items: center;
    gap: 5px;
    border-top: 2px solid #0d2340;
    background:
        radial-gradient(ellipse 22px 22px at 254px 12px, #a8d4f4 30%, transparent),
        radial-gradient(ellipse 12px 8px at 331px 18px, #6c4a4c 30%, transparent),
        radial-gradient(ellipse 22px 30px at 322px 14px, #9dbcc4 30%, transparent),
        radial-gradient(ellipse 22px 30px at 400px 18px, #a9d0e6 30%, transparent),
        radial-gradient(ellipse 9px 16px at 482px 16px, #3c5f74 30%, transparent),
        radial-gradient(ellipse 22px 24px at 477px 14px, #7fb0c4 30%, transparent),
        linear-gradient(90deg, #8fb2d4 0, #a9c5df 180px, #2a6cae 220px, #2264a6 500px, #1f5f9f 800px, #1a4a86 1250px, #6f93b8 100%);
}

.controls {
    margin-left: auto;
    align-self: flex-start;
    display: flex;
    border: 1px solid #b9cfe4;
    border-top: none;
    border-radius: 0 0 5px 5px;
    overflow: hidden;
}

.controls button {
    width: 27px;
    height: 17px;
    display: grid;
    place-items: center;
    border-right: 1px solid #b9cfe4;
    background: linear-gradient(#8fa9c4, #3f648c 50%, #4f7aa5);
}

.controls .quit {
    width: 47px;
    border-right: none;
    background: linear-gradient(#d88a80, #b8382c 50%, #c7564a);
}

.client {
    flex: 1;
    min-height: 0;
    display: flex;
    flex-direction: column;
    background: #f0f0f0;
    border-top: 1px solid #1d3b5e;
}

.menubar {
    flex: none;
    height: 20px;
    display: flex;
    gap: 15px;
    padding: 0 6px;
    background: linear-gradient(#fff, #eef1fa 40%, #d9e0f2);
    border-bottom: 1px solid #c8ccd6;
    box-sizing: border-box;
}

.menubar button {
    line-height: 18px;
    white-space: nowrap;
}

.toolrow {
    flex: none;
    height: 38px;
    display: flex;
    border-bottom: 1px solid #b8b8b8;
    background: #f2f2f2;
    overflow: hidden;
    box-sizing: border-box;
}

.group {
    flex: none;
    display: flex;
    align-items: center;
    padding-right: 1px;
    border-right: 1px solid #b4b4b4;
    box-sizing: border-box;
}

.shrink {
    flex: 0 1 auto;
    min-width: 0;
    overflow: hidden;
}

.last {
    border-right: none;
}

.shrink + .last {
    width: 38px;
}

.grip {
    flex: none;
    width: 10px;
    height: 32px;
    background: radial-gradient(circle at 5px 2px, #b0b0b0 1px, transparent 1px) 0 0 / 10px 4px;
}

.tool {
    flex: none;
    width: 34px;
    height: 34px;
    display: flex;
    align-items: center;
    justify-content: center;
    box-sizing: border-box;
}

.drop {
    width: 56px;
    height: 32px;
    gap: 8px;
}

.on {
    border: 1px solid #555;
    border-radius: 3px;
    background: linear-gradient(#d8d8d8, #f2f2f2);
    box-shadow: inset 0 0 2px #777;
}

.sep {
    flex: none;
    width: 1px;
    height: 30px;
    margin: 0 5px 0 2px;
    background: #7c7c7c;
}

.shadows {
    padding-right: 12px;
}

.scale {
    width: 144px;
    margin-left: 7px;
    display: flex;
    flex-direction: column;
}

.scale + .scale {
    margin-left: 17px;
}

.scale input {
    appearance: none;
    width: 100%;
    height: 12px;
    margin: 0;
    background: none;
}

.scale input::-webkit-slider-runnable-track {
    height: 6px;
    border-top: 1px solid #777;
    border-left: 1px solid #777;
}

.months::-webkit-slider-runnable-track {
    background: linear-gradient(90deg, #fdf3da, #f0c040 30%, #e88030 45%, #d81820 65%, #e86068 80%, #fbd8d8);
}

.hours::-webkit-slider-runnable-track {
    background: linear-gradient(90deg, #fff, #a8c4e8 30%, #6f9ad8 60%, #3a6cb0 75%, #0a1c3c);
}

.scale input::-webkit-slider-thumb {
    appearance: none;
    width: 5px;
    height: 12px;
    margin-top: -1px;
    border-right: 1px solid #666;
    border-bottom: 1px solid #666;
    background: #f4f4f4;
}

.ticks {
    display: grid;
    grid-template-columns: repeat(12, 12px);
    font: 10px/12px "Liberation Sans", "Noto Sans CJK SC", sans-serif;
    text-align: center;
}

.hourticks {
    grid-template-columns: auto 1fr auto;
}

.layer {
    display: flex;
    align-items: center;
    width: 144px;
    height: 20px;
    margin: 0 3px;
    padding-left: 4px;
    box-sizing: border-box;
    background: #fff;
}

.layer select {
    appearance: none;
    flex: 1;
    min-width: 0;
    padding: 0 8px;
    border: none;
    background: none;
    font: 11px var(--ui);
    color: #111;
}

.picker {
    width: 12px;
    height: 17px;
    display: grid;
    place-items: center;
    border: 1px solid #555;
    background: #f0f0f0;
}

main {
    flex: 1;
    min-height: 0;
    display: flex;
    padding-top: 1px;
}

.palette {
    flex: none;
    width: 72px;
    padding: 15px 2px 0;
    box-sizing: border-box;
    background: #f4f4f4;
    overflow: hidden;
}

.hgrip {
    display: block;
    height: 4px;
    margin: 0 1px;
    background: radial-gradient(circle at 2px 1px, #b0b0b0 1px, transparent 1px) 0 0 / 4px 4px;
}

.toolgrid {
    display: grid;
    grid-template-columns: 34px 34px;
}

.toolgrid .sep {
    grid-column: 1 / -1;
    width: auto;
    height: 1px;
    margin: 3px 1px 4px;
}

.viewport {
    flex: 1;
    min-width: 0;
    border-top: 2px solid #777;
    border-left: 2px solid #777;
    background: #cccdc8;
}

.viewport svg {
    width: 100%;
    height: 100%;
}

.tray {
    flex: none;
    width: 285px;
    padding: 0 1px 0 4px;
    box-sizing: border-box;
    display: flex;
    flex-direction: column;
    border-left: 1px solid #fff;
}

.trayhead {
    flex: none;
    height: 18px;
    display: flex;
    align-items: center;
    padding: 0 3px 0 4px;
    background: linear-gradient(90deg, #b8c4d8, #d3e3f4);
    color: #3f4d62;
}

.trayhead h2 {
    line-height: 18px;
}

.pin {
    margin: 0 7px 0 auto;
}

.trayclose {
    width: 14px;
    height: 14px;
    display: grid;
    place-items: center;
    border: 1px solid #6a2226;
    border-radius: 2px;
    background: #b9585c;
    box-sizing: border-box;
}

.traybody {
    flex: 1;
    min-height: 0;
    display: flex;
}

.content {
    flex: 1;
    min-width: 0;
    overflow: hidden;
    background: #f0f0f0;
    font-family: var(--cjk);
}

.materials {
    height: 178px;
    padding: 0 0 33px 6px;
    box-sizing: border-box;
    display: grid;
    grid-template-columns: repeat(5, 50px);
    grid-auto-rows: 50px;
    gap: 2px;
    align-content: end;
    background: #fff;
    border-bottom: 1px solid #7f8784;
    overflow: hidden;
    margin-bottom: 3px;
}

.mat {
    padding: 1px;
    border: 1px solid #8a8a8a;
    background: #fff;
}

.mat span {
    display: block;
    height: 100%;
}

.star { background: linear-gradient(38deg, transparent 47%, #6c6c6c 49%, #a8a8a8 52%, transparent 54%), linear-gradient(142deg, transparent 47%, #6c6c6c 49%, #a8a8a8 52%, transparent 54%), linear-gradient(transparent 47%, #777 49%, #a8a8a8 53%, transparent 54%), #8a8a8a; }
.weave { background: repeating-linear-gradient(90deg, #46506a88 0 2px, transparent 2px 5px), repeating-linear-gradient(#454f68 0 2px, #66708a 2px 4px); }
.frost { background: linear-gradient(120deg, #c3cddf, #d3dcea 50%, #c8d2e4); }
.plain { background: #b4b9bb; }
.dark { background: #6e6f6a; }
.chrome { background: linear-gradient(90deg, #eee, #999 22%, #bbb 32%, #f4f4f4 48%, #888 70%, #bbb 82%, #eee); }
.rust { background: radial-gradient(circle at 2px 3px, #9a4836 1px, transparent 2px) 0 0 / 7px 9px, radial-gradient(circle at 5px 2px, #d88a62 1px, transparent 2px) 0 0 / 9px 7px, #c06a4c; }
.tread { background: linear-gradient(45deg, transparent 38%, #777 42%, #fff 52%, transparent 58%) 0 0 / 12px 8px, linear-gradient(135deg, transparent 38%, #777 42%, #fff 52%, transparent 58%) 6px 4px / 12px 16px, #c6c8c8; }
.blotch { background: radial-gradient(circle at 14px 30px, #9aa2a6, transparent 16px), radial-gradient(circle at 34px 12px, #9aa1a5, transparent 14px), #90989c; }
.pale { background: #e5e5eb; }
.brushed { background: linear-gradient(#b0b0b0, #b6b6b6 30%, #a9aaa8 60%, #b0b0b0); }

.fold {
    height: 18px;
    margin-bottom: 1px;
    padding: 0 4px 0 8px;
    display: flex;
    align-items: center;
    gap: 6px;
    background: linear-gradient(#e4e4e4, #bdbdbd);
}

.fold h3 {
    line-height: 18px;
}

.fold button {
    width: 13px;
    height: 13px;
    margin-left: auto;
    display: grid;
    place-items: center;
    border: 1px solid #666;
    border-radius: 2px;
    background: #f4f4f4;
    box-sizing: border-box;
}

.style {
    display: flex;
    gap: 4px;
    padding: 2px;
    border-bottom: 1px solid #9a9a9a;
}

.thumb {
    flex: none;
    box-sizing: border-box;
    border: 1px solid #8a8a8a;
}

.about {
    flex: 1;
    min-width: 0;
    display: flex;
    flex-direction: column;
    gap: 1px;
}

.about input, .about textarea {
    box-sizing: border-box;
    width: 100%;
    margin: 0;
    padding: 0 2px;
    border: 1px solid #e2e2e2;
    border-top-color: #aaa;
    background: #fff;
    font: 12px/18px var(--cjk);
    color: #111;
    outline: none;
}

.about input {
    height: 20px;
}

.about textarea {
    flex: 1;
    padding: 1px 4px;
    line-height: 13px;
    line-break: anywhere;
    resize: none;
    overflow: hidden;
}

.styleactions {
    flex: none;
    width: 24px;
    display: flex;
    flex-direction: column;
    align-items: center;
    justify-content: space-between;
    padding: 1px 0 3px;
    box-sizing: border-box;
}

.tabs {
    display: flex;
    align-items: flex-end;
    height: 26px;
    padding-left: 1px;
    box-sizing: border-box;
    border-bottom: 1px solid #8e8e8e;
}

.tabs button {
    width: 39px;
    height: 18px;
    line-height: 18px;
    border: 1px solid #8e8e8e;
    border-bottom: none;
    box-sizing: border-box;
    padding-right: 5px;
    background: linear-gradient(#f4f4f4, #d8d8d8);
}

.tabs .current {
    width: 45px;
    height: 21px;
    background: #fff;
    border-color: #fff;
}

.pages {
    display: flex;
    align-items: center;
    height: 33px;
    margin-left: 5px;
    box-sizing: border-box;
    border-bottom: 1px solid #9a9a9a;
}

.pages button {
    width: 26px;
    height: 24px;
    display: grid;
    place-items: center;
}

.pages .sky {
    border-top: 1px solid #999;
}

.pages strong {
    margin: 0 2px 0 auto;
}

.settings {
    padding: 9px 0 0 10px;
    display: flex;
    flex-direction: column;
    gap: 6px;
}

.line {
    display: flex;
    align-items: center;
}

.name {
    width: 70px;
    display: flex;
    align-items: center;
    line-height: 16px;
    white-space: nowrap;
}

.off {
    width: auto;
    color: #777;
}

.name input {
    appearance: none;
    display: grid;
    place-items: center;
    width: 13px;
    height: 13px;
    margin: 0 3px 0 1px;
    border: 1px solid #8a8f94;
    background: linear-gradient(135deg, #d8dce2, #fff);
    box-sizing: border-box;
}

.name input:checked::after {
    content: "";
    width: 3px;
    height: 7px;
    margin-bottom: 2px;
    border: solid #33508c;
    border-width: 0 2px 2px 0;
    transform: rotate(40deg);
}

.name input:disabled::after {
    border-color: #aaa;
}

.color {
    width: 21px;
    height: 23px;
    border: 1px solid #8c8c8c;
}

.bg { background: #c9cbc8; }
.air { background: #c0cbd0; }
.soil { background: #d0cbb0; }

.opacity {
    width: 60px;
    height: 23px;
    padding-bottom: 8px;
    margin-left: 26px;
    box-sizing: border-box;
    display: flex;
    flex-direction: column;
    align-items: center;
    justify-content: center;
    line-height: 16px;
    color: #999;
}

.opacity input {
    appearance: none;
    flex: none;
    width: 56px;
    height: 14px;
    margin: 0;
    background: linear-gradient(#aaa, #aaa) center / 100% 1px no-repeat;
}

.opacity input::-webkit-slider-thumb {
    appearance: none;
    width: 6px;
    height: 13px;
    border: 1px solid #999;
    border-radius: 2px;
    background: #f4f4f4;
    box-sizing: border-box;
}

.scroll {
    flex: none;
    width: 16px;
    display: flex;
    flex-direction: column;
    align-items: center;
    padding-top: 8px;
    background: #f2f2f2;
}

.scrollthumb {
    width: 14px;
    height: 14px;
    margin-top: 472px;
    border: 1px solid #8f8f8f;
    border-radius: 2px;
    background: linear-gradient(90deg, #f4f4f4, #cfcfcf);
    box-sizing: border-box;
}

footer {
    flex: none;
    height: 29px;
    display: flex;
    align-items: center;
    gap: 14px;
    padding-left: 5px;
    border-top: 1px solid #fff;
    box-sizing: border-box;
}

.bar {
    width: 1px;
    height: 10px;
    margin: 0 -4px 0 -2px;
    background: #999;
}

footer p {
    font-family: var(--cjk);
    font-size: 15px;
    line-height: 26px;
}

footer p span {
    font: 12px var(--ui);
}

.brand {
    position: fixed;
    right: 0;
    bottom: 0;
    width: 339px;
    height: 160px;
    box-sizing: border-box;
    padding: 28px 18px 0 16px;
    display: flex;
    gap: 14px;
    background: #22305a;
    color: #dfe6f0;
}

.words {
    white-space: nowrap;
}

.big {
    display: flex;
    align-items: center;
    font: 700 47px/64px var(--cjk);
}

.big span {
    font: 400 60px/60px Roboto, sans-serif;
}

.small {
    font: 400 39px/44px Inter, sans-serif;
}
</style>
